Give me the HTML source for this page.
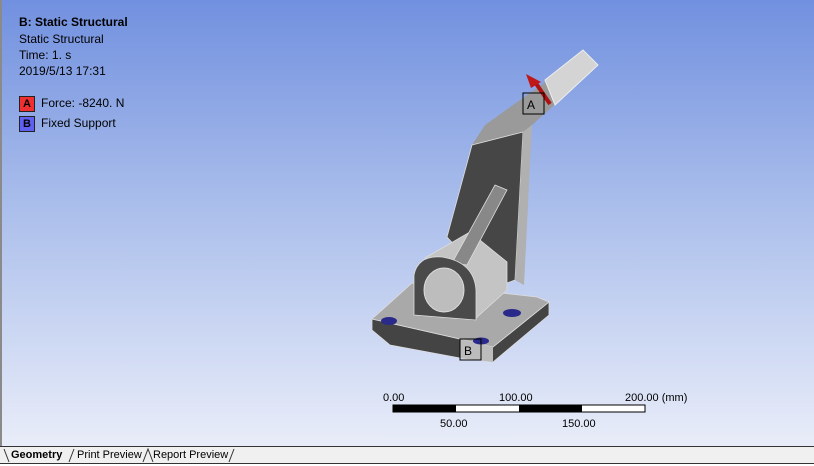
<!DOCTYPE html>
<html><head><meta charset="utf-8"><style>
body{margin:0;width:814px;height:466px;overflow:hidden;font-family:"Liberation Sans",sans-serif;}
#v{position:absolute;left:0;top:0;width:814px;height:446px;background:linear-gradient(#7190df,#a9bdeb 45%,#e9edf9);border-left:2px solid #8a8a8a;box-sizing:border-box}
.t{position:absolute;font-size:12px;color:#000;white-space:nowrap}
.lg{position:absolute;width:14px;height:14px;border:1px solid #222;font-weight:bold;font-size:11px;text-align:center;line-height:14px}
#tabs{position:absolute;left:0;top:446px;width:814px;height:16px;background:#f0f0f0;border-top:1px solid #333;border-bottom:1px solid #333;font-size:11px}
#tabs span{position:absolute;top:2px}
</style></head><body>
<div id="v">
<div class="t" style="left:17px;top:15px;font-weight:bold">B: Static Structural</div>
<div class="t" style="left:17px;top:32px">Static Structural</div>
<div class="t" style="left:17px;top:48px">Time: 1. s</div>
<div class="t" style="left:17px;top:64px">2019/5/13 17:31</div>
<div class="lg" style="left:17px;top:96px;background:#f03030">A</div>
<div class="t" style="left:39px;top:96px">Force: -8240. N</div>
<div class="lg" style="left:17px;top:116px;background:#6060f0">B</div>
<div class="t" style="left:39px;top:116px">Fixed Support</div>
<svg width="814" height="446" style="position:absolute;left:-2px;top:0">
<!-- base -->
<polygon points="372,319 372,330 390,345 460,358 493,362 549,315 549,302 493,347 460,339" fill="#444" stroke="#ddd" stroke-width="0.8"/>
<polygon points="372,319 412,283 537,297 549,302 493,347 460,339" fill="#a9a9a9" stroke="#ddd" stroke-width="0.8"/>
<polygon points="460,339 493,347 493,362 460,358" fill="#bcbcbc"/>
<!-- upper arm -->
<polygon points="472,145 485,125 520,100 560,72 583,50 598,65 560,100 532,125 523,132" fill="#9a9a9a"/>
<polygon points="545,80 583,50 598,65 555,105" fill="#d4d4d4" stroke="#eee"/>
<!-- column -->
<polygon points="447,237 472,145 523,132 515,280 507,283 470,262" fill="#464646" stroke="#ddd" stroke-width="0.8"/>
<polygon points="515,280 523,132 532,125 524,285" fill="#b0b0b0"/>
<!-- cylinder body -->
<polygon points="425,258 470,232 507,262 507,290 476,318 440,265" fill="#c4c4c4" stroke="#ddd" stroke-width="0.8"/>
<!-- rib -->
<polygon points="452,263 495,185 507,190 467,265" fill="#888" stroke="#ddd" stroke-width="0.8"/>
<!-- cylinder front -->
<path d="M414,315 L414,275 Q418,255 442,257 Q474,262 476,290 L476,320 Z" fill="#4a4a4a" stroke="#ddd" stroke-width="0.8"/>
<ellipse cx="444" cy="290" rx="20" ry="22" fill="#bdbdbd" stroke="#ddd"/>
<!-- holes -->
<ellipse cx="389" cy="321" rx="8" ry="4" fill="#2a2a8a"/>
<ellipse cx="512" cy="313" rx="9" ry="4" fill="#2a2a8a"/>
<ellipse cx="481" cy="341" rx="8" ry="3.5" fill="#2a2a8a"/>
<!-- arrow -->
<line x1="550" y1="104" x2="535" y2="82" stroke="#b01010" stroke-width="4"/>
<polygon points="526,74 541,82 531,88" fill="#c01818"/>
<!-- boxes -->
<rect x="523" y="93" width="21" height="21" fill="none" stroke="#000"/>
<text x="527" y="109" font-size="12" font-family="Liberation Sans">A</text>
<rect x="460" y="339" width="21" height="21" fill="none" stroke="#000"/>
<text x="464" y="355" font-size="12" font-family="Liberation Sans">B</text>
<!-- scale -->
<rect x="393" y="405" width="252" height="7" fill="#fff" stroke="#000"/>
<rect x="393" y="405" width="63" height="7" fill="#000"/>
<rect x="519" y="405" width="63" height="7" fill="#000"/>
<g font-size="11" font-family="Liberation Sans">
<text x="383" y="401">0.00</text><text x="499" y="401">100.00</text><text x="625" y="401">200.00 (mm)</text>
<text x="440" y="427">50.00</text><text x="562" y="427">150.00</text></g>
</svg>
</div>
<div id="tabs">
<svg width="240" height="16" style="position:absolute;left:0;top:0"><path d="M4,2 L9,15 M69,15 L74,2 M143,15 L148,2 L153,15 M229,15 L234,2" stroke="#333" fill="none"/></svg>
<span style="left:11px;font-weight:bold">Geometry</span>
<span style="left:77px">Print Preview</span>
<span style="left:153px">Report Preview</span>
</div>
</body></html>
